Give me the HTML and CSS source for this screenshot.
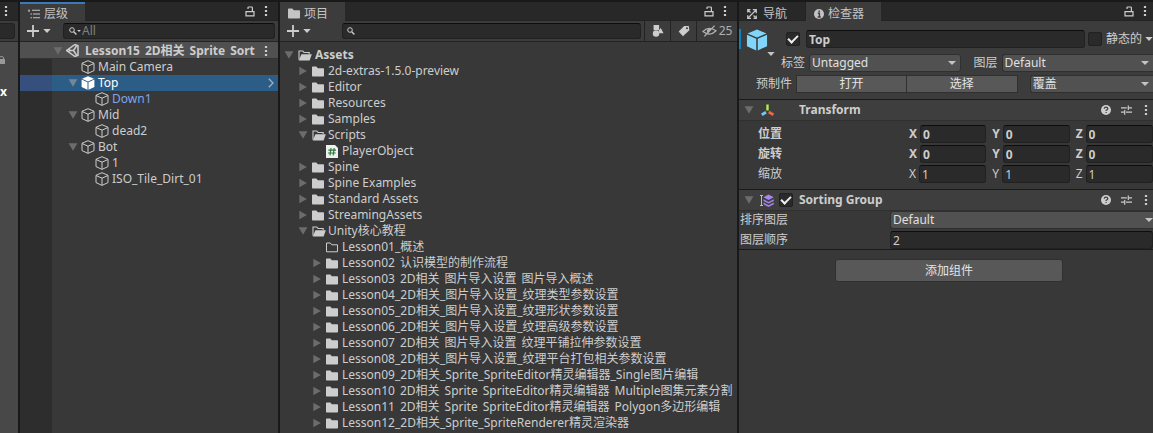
FILE: index.html
```html
<!DOCTYPE html>
<html lang="zh-CN">
<head>
<meta charset="utf-8">
<title>Unity Editor</title>
<link rel="stylesheet" href="styles.css">
</head>
<body>
<svg class="defs" aria-hidden="true">
  <symbol id="cube" viewBox="0 0 14 14"><path d="M7 .7 13 3.3V10.6L7 13.4 1 10.6V3.3ZM1 3.5 7 6.2 13 3.5M7 6.2V13.2" fill="none" stroke="currentColor" stroke-width="1" stroke-linejoin="round"/></symbol>
  <symbol id="cube-solid" viewBox="0 0 14 14"><path d="M7 .3 13 2.8 7 5.4 1 2.8ZM.6 3.6 6.5 6.2V13.7L.6 10.9ZM13.4 3.6 7.5 6.2V13.7L13.4 10.9Z" fill="currentColor"/></symbol>
  <symbol id="folder" viewBox="0 0 12 11"><path d="M0 1.3Q0 .5.8.5H4.3L5.8 2.3H11.2Q12 2.3 12 3.1V9.7Q12 10.5 11.2 10.5H.8Q0 10.5 0 9.7Z" fill="currentColor"/></symbol>
  <symbol id="folder-empty" viewBox="0 0 12 11"><path d="M.5 1H4.4L5.8 2.8H11.5V9.8H.5Z" fill="none" stroke="currentColor"/></symbol>
  <symbol id="folder-open" viewBox="0 0 14 11"><path d="M1 9.8V1H4.8L6 2.5H11.2V4" fill="none" stroke="currentColor" stroke-width="1.1"/><path d="M3.4 4.2H13.8L11.6 10.5H.8Z" fill="currentColor"/></symbol>
  <symbol id="down" viewBox="0 0 10 8"><path d="M.6.3H9.4L5 7.7Z" fill="currentColor"/></symbol>
  <symbol id="right" viewBox="0 0 8 10"><path d="M.3.8 7.8 5 .3 9.2Z" fill="currentColor"/></symbol>
  <symbol id="caret" viewBox="0 0 8 4"><path d="M.3 0H7.7L4 4Z" fill="currentColor"/></symbol>
  <symbol id="lock" viewBox="0 0 10 11"><path d="M1 5.7H9V9.8H1ZM3 2.9V1.6Q3 1 3.6 1H6.6Q7.4 1 7.4 1.8V5.5" fill="none" stroke="currentColor" stroke-width="1.2"/></symbol>
  <symbol id="dots" viewBox="0 0 4 12"><path d="M.9.9H3.1V3.1H.9ZM.9 4.9H3.1V7.1H.9ZM.9 8.9H3.1V11.1H.9Z" fill="currentColor"/></symbol>
  <symbol id="plus" viewBox="0 0 12 12"><path d="M6 0V12M0 6H12" stroke="currentColor" stroke-width="1.8"/></symbol>
  <symbol id="search" viewBox="0 0 8 8"><circle cx="3" cy="3" r="2.3" fill="none" stroke="currentColor"/><path d="M4.7 4.7 7.4 7.4" stroke="currentColor" stroke-width="1.4"/></symbol>
  <symbol id="help" viewBox="0 0 10 10"><circle cx="5" cy="5" r="5" fill="currentColor"/><path d="M3.2 3.8Q3.4 2.2 5 2.2T6.8 3.7Q6.8 4.6 5.1 5.3V6M5.1 7V8.1" fill="none" stroke="#3e3e3e" stroke-width="1.2"/></symbol>
  <symbol id="preset" viewBox="0 0 11 10"><path d="M0 2.8H5.8M8 2.8H11M0 7.2H3M5 7.2H11M7.3.5V5M3.7 5V9.7" stroke="currentColor" stroke-width="1.2"/></symbol>
</svg>

<div class="editor">
  <aside class="strip">
    <div class="tabs tabs-end"><svg class="dots"><use href="#dots"/></svg></div>
    <div class="toolbar strip-toolbar"><span class="strip-field"></span></div>
    <div class="strip-body">
      <svg class="strip-lock" viewBox="0 0 6 8"><path d="M0 3H5V8H0Z" fill="currentColor"/><path d="M0 .7H2.2Q3.6.7 3.6 2V3" fill="none" stroke="currentColor"/></svg>
      <b>x</b>
    </div>
  </aside>

  <section class="panel hierarchy">
    <header class="tabs">
      <button class="tab active focused"><svg class="i12" viewBox="0 0 12 10"><path d="M0 1.2H2M4 1.2H12M2.5 5H4M5 5H12M2.5 8.8H4M5 8.8H12M1 2V3" stroke="currentColor" stroke-width="1.1"/></svg>层级</button>
      <span class="tab-tools"><svg class="lock"><use href="#lock"/></svg><svg class="dots"><use href="#dots"/></svg></span>
    </header>
    <div class="toolbar">
      <button class="add" aria-label="Create"><svg class="i12"><use href="#plus"/></svg><svg class="caret"><use href="#caret"/></svg></button>
      <label class="search"><svg class="i8"><use href="#search"/></svg><svg class="tiny"><use href="#caret"/></svg><input type="text" placeholder="All" aria-label="Search hierarchy"></label>
    </div>
    <ul class="objects">
      <li class="scene"><svg class="fold"><use href="#down"/></svg><svg class="unity" viewBox="0 0 13 13"><path d="M9 .5.6 6.5 9 12.5M9 .5 12 1.8V11.2L9 12.5M3 6.5H7.5L10.5 2M7.5 6.5 10.5 11M4 4.5.8 6.5 4 8.7" fill="none" stroke="currentColor" stroke-width="1.5"/></svg><b class="name">Lesson15<i class="gap"> </i>2D相关<i class="gap"> </i>Sprite<i class="gap"> </i>Sort</b><svg class="dots"><use href="#dots"/></svg></li>
      <li><span class="fold"></span><svg class="cube"><use href="#cube"/></svg><span>Main Camera</span></li>
      <li class="selected"><svg class="fold"><use href="#down"/></svg><svg class="cube"><use href="#cube-solid"/></svg><span>Top</span><svg class="enter" viewBox="0 0 6 10"><path d="M.8.8 5 5 .8 9.2" fill="none" stroke="currentColor" stroke-width="1.3"/></svg></li>
      <li class="deep prefab"><span class="fold"></span><svg class="cube"><use href="#cube"/></svg><span>Down1</span></li>
      <li><svg class="fold"><use href="#down"/></svg><svg class="cube"><use href="#cube"/></svg><span>Mid</span></li>
      <li class="deep"><span class="fold"></span><svg class="cube"><use href="#cube"/></svg><span>dead2</span></li>
      <li><svg class="fold"><use href="#down"/></svg><svg class="cube"><use href="#cube"/></svg><span>Bot</span></li>
      <li class="deep"><span class="fold"></span><svg class="cube"><use href="#cube"/></svg><span>1</span></li>
      <li class="deep"><span class="fold"></span><svg class="cube"><use href="#cube"/></svg><span>ISO_Tile_Dirt_01</span></li>
    </ul>
  </section>

  <section class="panel project">
    <header class="tabs">
      <button class="tab active"><svg class="folder"><use href="#folder"/></svg>项目</button>
      <span class="tab-tools"><svg class="lock"><use href="#lock"/></svg><svg class="dots"><use href="#dots"/></svg></span>
    </header>
    <div class="toolbar">
      <button class="add" aria-label="Create"><svg class="i12"><use href="#plus"/></svg><svg class="caret"><use href="#caret"/></svg></button>
      <label class="search wide"><svg class="i8"><use href="#search"/></svg><input type="text" aria-label="Search project"></label>
      <div class="filters">
        <button aria-label="Search by type"><svg class="i12" viewBox="0 0 12 13"><path d="M1.2 0H7.2V5.4H1.2ZM9 3.2 12 9H7.4L6.6 6.3Z" fill="currentColor"/><circle cx="3.9" cy="9.3" r="3.5" fill="currentColor"/></svg></button>
        <button aria-label="Search by label"><svg class="i12" viewBox="0 0 12 12"><path d="M6.2 1 10.8.9 11.4 5.2 4.9 11.2.7 6.6Z" fill="currentColor"/><circle cx="9" cy="3.2" r="1" fill="#3c3c3c"/></svg></button>
        <button class="hidden-count"><svg class="eye" viewBox="0 0 15 12"><path d="M1 6.4Q7 .6 14 5.8 8 12 1 6.4ZM12.6.6 2.4 11.4" fill="none" stroke="currentColor" stroke-width="1.3"/><path d="M5 5Q7.5 3 9 4.3L6 8.3Q4.4 7.3 5 5Z" fill="currentColor"/></svg>25</button>
      </div>
    </div>
    <ul class="assets">
      <li><svg class="fold"><use href="#down"/></svg><svg class="open"><use href="#folder-open"/></svg><b>Assets</b></li>
      <li class="l1"><svg class="fold"><use href="#right"/></svg><svg class="folder"><use href="#folder"/></svg><span>2d-extras-1.5.0-preview</span></li>
      <li class="l1"><svg class="fold"><use href="#right"/></svg><svg class="folder"><use href="#folder"/></svg><span>Editor</span></li>
      <li class="l1"><svg class="fold"><use href="#right"/></svg><svg class="folder"><use href="#folder"/></svg><span>Resources</span></li>
      <li class="l1"><svg class="fold"><use href="#right"/></svg><svg class="folder"><use href="#folder"/></svg><span>Samples</span></li>
      <li class="l1"><svg class="fold"><use href="#down"/></svg><svg class="open"><use href="#folder-open"/></svg><span>Scripts</span></li>
      <li class="l2"><span class="fold"></span><svg class="script" viewBox="0 0 12 13"><path d="M0 0H9L12 3V13H0Z" fill="#f0f0f0"/><path d="M5 3 4 10.3M8.2 3 7.2 10.3M2.3 5.2H10M2 8H9.7" stroke="#2c7a3c" stroke-width="1.2"/></svg><span>PlayerObject</span></li>
      <li class="l1"><svg class="fold"><use href="#right"/></svg><svg class="folder"><use href="#folder"/></svg><span>Spine</span></li>
      <li class="l1"><svg class="fold"><use href="#right"/></svg><svg class="folder"><use href="#folder"/></svg><span>Spine Examples</span></li>
      <li class="l1"><svg class="fold"><use href="#right"/></svg><svg class="folder"><use href="#folder"/></svg><span>Standard Assets</span></li>
      <li class="l1"><svg class="fold"><use href="#right"/></svg><svg class="folder"><use href="#folder"/></svg><span>StreamingAssets</span></li>
      <li class="l1"><svg class="fold"><use href="#down"/></svg><svg class="open"><use href="#folder-open"/></svg><span>Unity核心教程</span></li>
      <li class="l2"><span class="fold"></span><svg class="folder"><use href="#folder-empty"/></svg><span>Lesson01_概述</span></li>
      <li class="l2"><svg class="fold"><use href="#right"/></svg><svg class="folder"><use href="#folder"/></svg><span>Lesson02<i class="gap"> </i>认识模型的制作流程</span></li>
      <li class="l2"><svg class="fold"><use href="#right"/></svg><svg class="folder"><use href="#folder"/></svg><span>Lesson03<i class="gap"> </i>2D相关<i class="gap"> </i>图片导入设置<i class="gap"> </i>图片导入概述</span></li>
      <li class="l2"><svg class="fold"><use href="#right"/></svg><svg class="folder"><use href="#folder"/></svg><span>Lesson04_2D相关_图片导入设置_纹理类型参数设置</span></li>
      <li class="l2"><svg class="fold"><use href="#right"/></svg><svg class="folder"><use href="#folder"/></svg><span>Lesson05_2D相关_图片导入设置_纹理形状参数设置</span></li>
      <li class="l2"><svg class="fold"><use href="#right"/></svg><svg class="folder"><use href="#folder"/></svg><span>Lesson06_2D相关_图片导入设置_纹理高级参数设置</span></li>
      <li class="l2"><svg class="fold"><use href="#right"/></svg><svg class="folder"><use href="#folder"/></svg><span>Lesson07<i class="gap"> </i>2D相关<i class="gap"> </i>图片导入设置<i class="gap"> </i>纹理平铺拉伸参数设置</span></li>
      <li class="l2"><svg class="fold"><use href="#right"/></svg><svg class="folder"><use href="#folder"/></svg><span>Lesson08_2D相关_图片导入设置_纹理平台打包相关参数设置</span></li>
      <li class="l2"><svg class="fold"><use href="#right"/></svg><svg class="folder"><use href="#folder"/></svg><span>Lesson09_2D相关_Sprite_SpriteEditor精灵编辑器_Single图片编辑</span></li>
      <li class="l2"><svg class="fold"><use href="#right"/></svg><svg class="folder"><use href="#folder"/></svg><span>Lesson10<i class="gap"> </i>2D相关<i class="gap"> </i>Sprite<i class="gap"> </i>SpriteEditor精灵编辑器<i class="gap"> </i>Multiple图集元素分割</span></li>
      <li class="l2"><svg class="fold"><use href="#right"/></svg><svg class="folder"><use href="#folder"/></svg><span>Lesson11<i class="gap"> </i>2D相关<i class="gap"> </i>Sprite<i class="gap"> </i>SpriteEditor精灵编辑器<i class="gap"> </i>Polygon多边形编辑</span></li>
      <li class="l2"><svg class="fold"><use href="#right"/></svg><svg class="folder"><use href="#folder"/></svg><span>Lesson12_2D相关_Sprite_SpriteRenderer精灵渲染器</span></li>
    </ul>
  </section>

  <section class="panel inspector">
    <header class="tabs">
      <button class="tab nav"><svg class="i10" viewBox="0 0 10 10"><path d="M1 9 9 1M1 1 3.5 3.5M6.5 6.5 9 9M5.8.7H9.3V4.2M.7 3.5V.7H3.5M.7 6.3V9.3H4M9.3 6.5V9.3H6.5" fill="none" stroke="currentColor" stroke-width="1.2"/></svg>导航</button>
      <button class="tab active"><svg class="i10" viewBox="0 0 10 10"><circle cx="5" cy="5" r="5" fill="currentColor"/><path d="M5.2 1.4V3M3.8 4.3H5.4V8M3.6 8H6.8" fill="none" stroke="#3c3c3c" stroke-width="1.4"/></svg>检查器</button>
      <span class="tab-tools"><svg class="lock"><use href="#lock"/></svg><svg class="dots"><use href="#dots"/></svg></span>
    </header>
    <div class="object">
      <div class="name-row">
        <span class="object-icon"><svg class="big-cube"><use href="#cube-solid"/></svg><svg class="caret"><use href="#caret"/></svg></span>
        <input class="check" type="checkbox" checked aria-label="Active">
        <input class="field bold" type="text" value="Top" aria-label="Name">
        <label class="static"><input class="check" type="checkbox">静态的</label>
        <svg class="caret"><use href="#caret"/></svg>
      </div>
      <div class="tag-row">
        <label for="tag">标签</label><span class="select"><select id="tag"><option>Untagged</option></select></span>
        <label for="layer">图层</label><span class="select flush"><select id="layer"><option>Default</option></select></span>
      </div>
      <div class="prefab-row">
        <span>预制件</span>
        <div class="pair"><button>打开</button><button>选择</button></div>
        <span class="select flush"><select aria-label="Overrides"><option>覆盖</option></select></span>
      </div>
    </div>

    <div class="component">
      <header class="component-head">
        <svg class="fold"><use href="#down"/></svg>
        <svg class="axes" viewBox="0 0 13 13"><path d="M6.5.5V6.5" stroke="#b4ee4c" stroke-width="2.4"/><path d="M5 8.2.8 10.8" stroke="#6fc8f5" stroke-width="2.8"/><path d="M7.8 8 12.4 10.8" stroke="#f4673e" stroke-width="2.8"/></svg>
        <b class="title">Transform</b>
        <svg class="i10"><use href="#help"/></svg><svg class="preset"><use href="#preset"/></svg><svg class="dots"><use href="#dots"/></svg>
      </header>
      <div class="vectors">
        <div class="vector bold"><span class="vlabel">位置</span><label>X<input class="field" value="0"></label><label>Y<input class="field" value="0"></label><label>Z<input class="field" value="0"></label></div>
        <div class="vector bold"><span class="vlabel">旋转</span><label>X<input class="field" value="0"></label><label>Y<input class="field" value="0"></label><label>Z<input class="field" value="0"></label></div>
        <div class="vector"><span class="vlabel">缩放</span><label>X<input class="field" value="1"></label><label>Y<input class="field" value="1"></label><label>Z<input class="field" value="1"></label></div>
      </div>
    </div>

    <div class="component">
      <header class="component-head">
        <svg class="fold"><use href="#down"/></svg>
        <svg class="layers" viewBox="0 0 14 13"><path d="M1.5 1V12M0 1.5H3M0 11.5H3" stroke="#bbb"/><path d="M3.5 3.2 8.5.5 13.8 3.2 8.5 6ZM3.5 5.2 8.5 8 13.8 5.2V7L8.5 9.6 3.5 7ZM3.5 8.6 8.5 11.2 13.8 8.6V10.2L8.5 13 3.5 10.2Z" fill="#a685f2"/></svg>
        <input class="check" type="checkbox" checked aria-label="Enabled">
        <b class="title">Sorting Group</b>
        <svg class="i10"><use href="#help"/></svg><svg class="preset"><use href="#preset"/></svg><svg class="dots"><use href="#dots"/></svg>
      </header>
      <div class="props">
        <label for="sort-layer">排序图层</label><span class="select edge"><select id="sort-layer"><option>Default</option></select></span>
        <label for="order">图层顺序</label><input id="order" class="field" value="2">
      </div>
    </div>
    <div class="footer"><button class="add-component">添加组件</button></div>
  </section>
</div>
</body>
</html>
```
FILE: styles.css
```css
* { box-sizing: border-box; }
body {
  margin: 0;
  background: #191919;
  color: #cdcdcd;
  font: 12px/16px "Noto Sans", "Noto Sans CJK SC", sans-serif;
}
button, input, select { font: inherit; color: inherit; margin: 0; }
button { border: 0; padding: 0; background: none; }
ul { list-style: none; margin: 0; padding: 0; }
svg { flex: none; display: block; }
.defs { position: absolute; width: 0; height: 0; }

.editor {
  display: grid;
  grid-template-columns: 18px minmax(0, 258fr) minmax(0, 457fr) minmax(0, 414fr);
  gap: 2px;
  min-height: 100vh;
  padding-top: 2px;
}
.panel, .strip { background: #383838; overflow: hidden; }
.strip, .hierarchy { display: flex; flex-direction: column; }

/* icon sizes */
.i8 { width: 8px; height: 8px; }
.i10 { width: 10px; height: 10px; }
.i12 { width: 12px; height: 12px; }
.dots { width: 4px; height: 12px; }
.lock { width: 10px; height: 11px; }
.caret { width: 8px; height: 4px; }
.tiny { width: 4px; height: 2px; }
.cube { width: 14px; height: 14px; }
.folder { width: 12px; height: 11px; }
.open { width: 14px; height: 11px; }
.script { width: 12px; height: 13px; }
.eye { width: 15px; height: 12px; }
.unity, .axes { width: 13px; height: 13px; }
.layers { width: 14px; height: 13px; }
.preset { width: 11px; height: 10px; }
.fold { width: 10px; height: 8px; color: #6c6c6c; flex: none; }
.assets .fold { height: 10px; }

/* tabs and toolbars */
.tabs { display: flex; flex: none; height: 19px; background: #282828; border-bottom: 1px solid #232323; }
.tab { display: flex; align-items: center; gap: 4px; height: 19px; padding: 3px 17px 0 8px; border-top: 1px solid transparent; color: #c4c4c4; }
.tab.active { background: #3c3c3c; }
.tab.focused { border-top: 2px solid #3a79bb; padding-top: 2px; }
.tab.nav { padding-right: 18px; gap: 6px; border-right: 1px solid #222; }
.tab-tools { display: flex; align-items: center; gap: 9px; margin-left: auto; padding-right: 10px; }
.inspector .tab-tools { padding-right: 6px; }
.tabs-end { justify-content: center; align-items: center; padding-right: 7px; }
.toolbar { display: flex; flex: none; align-items: center; height: 21px; background: #3c3c3c; border-bottom: 1px solid #232323; }
.add { display: flex; align-items: center; gap: 4px; padding-left: 7px; }
.search { display: flex; align-items: center; flex: 1; min-width: 0; height: 16px; margin: 0 3px 0 12px; padding-left: 5px; background: #2a2a2a; border: 1px solid #212121; border-top-color: #0d0d0d; border-radius: 3px; }
.search input { flex: 1; min-width: 0; height: 14px; border: 0; padding: 0 5px; background: none; outline: 0; }
.hierarchy .search input { padding-left: 1px; }
.search input::placeholder { color: #808080; opacity: 1; }
.search.wide { margin-left: 31px; padding-left: 4px; }
.filters { display: flex; height: 20px; }
.filters button { display: flex; align-items: center; justify-content: center; width: 26px; border-left: 1px solid #232323; }
.filters .hidden-count { width: 41px; gap: 2px; color: #b0b0b0; }

/* neighbouring panel */
.strip-field { width: 15px; height: 16px; background: #2a2a2a; border: 1px solid #212121; border-left: 0; border-radius: 0 3px 3px 0; }
.strip-body { flex: 1; padding-top: 14px; background: #484848; color: #999; }
.strip-lock { width: 6px; height: 8px; margin-bottom: 20px; }
.strip-body b { display: block; line-height: 16px; color: #fff; }

/* hierarchy */
.objects { flex: 1; background: linear-gradient(to right, #2d2d2d 32px, #383838 32px); }
.objects li { display: flex; align-items: center; gap: 3px; height: 16px; padding-left: 48px; white-space: nowrap; }
.objects .deep { padding-left: 62px; }
.objects .scene { height: 17px; padding: 1px 10px 0 33px; background: #505050; border-bottom: 1px solid #333; }
.scene .name { flex: 1; overflow: hidden; margin-left: 3px; white-space: nowrap; }
.objects .selected { background: linear-gradient(to right, #35507d 32px, #2c5d87 32px); color: #fff; }
.selected .fold { color: #70889a; }
.enter { width: 6px; height: 10px; margin-left: auto; margin-right: 4px; color: #9bb4ca; }
.prefab { color: #7fa5ee; }
.prefab .cube { color: #cdcdcd; }
.gap { display: inline-block; width: 5px; white-space: pre; }

/* project */
.assets { padding: 5px 0 2px 4px; }
.assets li { display: flex; align-items: center; gap: 4px; height: 16px; white-space: nowrap; }
.assets .l1 { padding-left: 14px; }
.assets .l2 { padding-left: 28px; }
.assets .open { margin-right: -2px; }
.assets b { padding-left: 1px; }

/* inspector controls */
.field { flex: 1; min-width: 0; width: 100%; height: 18px; padding: 0 2px; background: #2a2a2a; border: 1px solid #212121; border-top-color: #0d0d0d; border-radius: 3px; outline: 0; }
.bold { font-weight: 700; }
.check { appearance: none; flex: none; width: 14px; height: 14px; background: #2a2a2a; border: 1px solid #212121; border-radius: 2px; display: grid; place-items: center; }
.check:checked::after { content: ""; width: 8px; height: 4px; margin-bottom: 3px; border: solid #eee; border-width: 0 0 2px 2px; transform: rotate(-45deg); }
.select { position: relative; display: flex; flex: 1; min-width: 0; }
.select select { appearance: none; flex: 1; min-width: 0; height: 18px; padding: 0 16px 0 2px; background: #515151; border: 1px solid #303030; border-radius: 3px; outline: 0; line-height: 16px; color: #e0e0e0; }
.select::after { content: ""; position: absolute; right: 5px; top: 7px; border: 4px solid transparent; border-top-color: #c4c4c4; border-bottom: 0; }
.flush select, .edge select { border-right: 0; border-radius: 3px 0 0 3px; }
.flush::after { right: 4px; }
.edge::after { right: 0; }

.object { display: flex; flex-direction: column; gap: 3px; padding: 7px 0 6px; background: #3c3c3c; border-bottom: 1px solid #1a1a1a; }
.name-row { display: flex; align-items: center; height: 22px; margin-bottom: 1px; }
.name-row .field { margin: 0 3px 0 6px; }
.object-icon { position: relative; flex: none; width: 47px; height: 20px; padding-left: 5px; border-left: 2px solid #0f81be; color: #81d4fa; }
.big-cube { width: 22px; height: 22px; }
.object-icon .caret { position: absolute; left: 26px; top: 23px; color: #c4c4c4; }
.static { display: flex; align-items: center; gap: 4px; margin-right: 3px; white-space: nowrap; }
.tag-row { display: flex; align-items: center; gap: 4px; padding-left: 42px; }
.tag-row .select + label { margin-left: 9px; }
.prefab-row { display: flex; align-items: center; gap: 4px; padding-left: 17px; }
.pair { display: grid; grid-template-columns: 1fr 1fr; flex: 221; margin-right: 8px; }
.pair button { height: 18px; background: #585858; border: 1px solid #303030; color: #e4e4e4; line-height: 16px; }
.pair button + button { border-left: 0; }
.prefab-row .select { flex: 123; }

.component { border-bottom: 1px solid #1a1a1a; }
.component-head { display: flex; align-items: center; height: 21px; padding: 0 5px; background: #3e3e3e; border-bottom: 1px solid #303030; }
.component-head .axes { margin: 0 25px 0 7px; }
.component-head .layers { margin: 0 5px 0 6px; }
.component-head .check { margin-right: 6px; }
.title { flex: 1; }
.component-head .preset { margin: 0 12px 0 10px; }
.vectors { display: flex; flex-direction: column; gap: 2px; padding: 4px 0 6px 19px; }
.vector { display: flex; align-items: center; gap: 6px; }
.vlabel { flex: none; width: 145px; }
.vector label { display: flex; align-items: center; gap: 3px; flex: 1; min-width: 0; }
.props { display: grid; grid-template-columns: 150px 1fr; align-items: center; row-gap: 2px; padding-left: 1px; }
.footer { display: flex; justify-content: center; padding-top: 9px; }
.add-component { width: 55%; height: 23px; margin-left: 6px; background: #585858; border: 1px solid #303030; border-radius: 3px; color: #e4e4e4; }
```
